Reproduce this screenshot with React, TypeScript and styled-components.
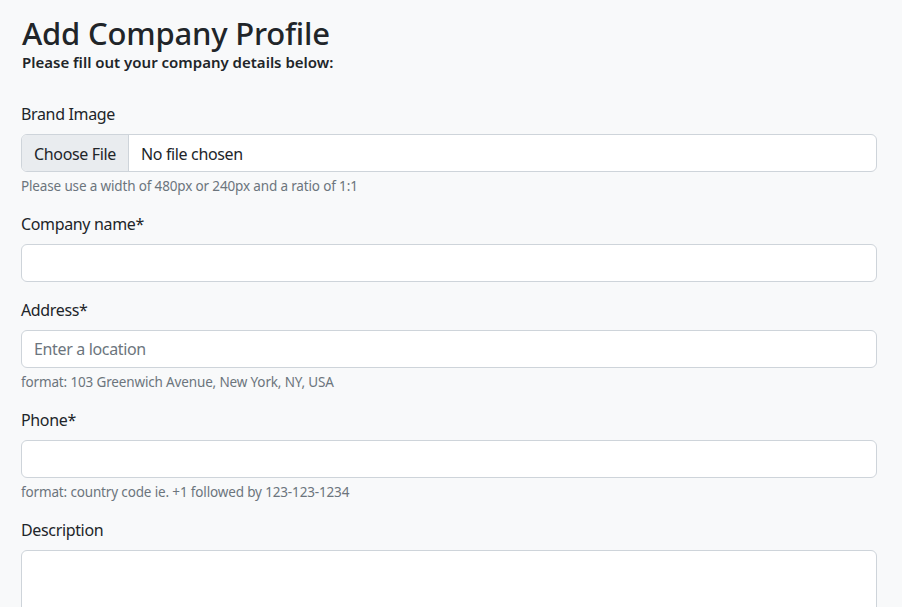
import React from "react";
import styled, { createGlobalStyle } from "styled-components";

const Global = createGlobalStyle`
  html, body { margin: 0; padding: 0; background: #f8f9fa; }
  body {
    font-family: "Noto Sans", "Open Sans", "Liberation Sans", sans-serif;
    color: #212529;
    font-size: 16px;
    line-height: 1.5;
  }
  * { box-sizing: border-box; }
`;

const Page = styled.div`
  padding: 14px 25px 0 21px;
  min-height: 607px;
`;

const Title = styled.h1`
  margin: 0 0 1px;
  font-size: 31px;
  font-weight: 500;
  line-height: 38px;
  letter-spacing: -0.2px;
  padding-left: 1px;
`;

const Subtitle = styled.h6`
  margin: 0 0 31px;
  font-size: 15px;
  font-weight: 600;
  line-height: 18px;
  letter-spacing: 0;
  padding-left: 1px;
`;

const Group = styled.div`
  margin-bottom: 16px;
`;

const Label = styled.label`
  display: block;
  margin-bottom: 8px;
  font-size: 16px;
  line-height: 24px;
  letter-spacing: -0.35px;
`;

const Control = styled.input`
  display: block;
  width: 100%;
  height: 38px;
  padding: 6px 12px;
  font: inherit;
  font-size: 16px;
  line-height: 1.5;
  letter-spacing: -0.35px;
  color: #212529;
  background: #fff;
  border: 1px solid #ced4da;
  border-radius: 6px;
  overflow: hidden;
  &::placeholder { color: #6c757d; opacity: 1; }
  &::file-selector-button {
    font: inherit;
    letter-spacing: -0.35px;
    height: 38px;
    margin: -6px 12px -6px -12px;
    padding: 6px 12px;
    color: #212529;
    background: #e9ecef;
    border: 0;
    border-right: 1px solid #ced4da;
    border-radius: 0;
  }
`;

const Area = styled.textarea`
  display: block;
  width: 100%;
  height: 86px;
  padding: 6px 12px;
  font: inherit;
  background: #fff;
  border: 1px solid #ced4da;
  border-radius: 6px;
  resize: vertical;
`;

const Help = styled.div`
  margin-top: 4px;
  font-size: 13.5px;
  line-height: 20px;
  letter-spacing: -0.15px;
  color: #6c757d;
`;

export default function App() {
  return (
    <>
      <Global />
      <Page>
        <Title>Add Company Profile</Title>
        <Subtitle>Please fill out your company details below:</Subtitle>
        <Group>
          <Label htmlFor="brand">Brand Image</Label>
          <Control id="brand" type="file" />
          <Help>Please use a width of 480px or 240px and a ratio of 1:1</Help>
        </Group>
        <Group>
          <Label htmlFor="name">Company name*</Label>
          <Control id="name" type="text" />
        </Group>
        <Group>
          <Label htmlFor="addr">Address*</Label>
          <Control id="addr" type="text" placeholder="Enter a location" />
          <Help>format: 103 Greenwich Avenue, New York, NY, USA</Help>
        </Group>
        <Group>
          <Label htmlFor="phone">Phone*</Label>
          <Control id="phone" type="tel" />
          <Help>format: country code ie. +1 followed by 123-123-1234</Help>
        </Group>
        <Group>
          <Label htmlFor="desc">Description</Label>
          <Area id="desc" />
        </Group>
      </Page>
    </>
  );
}
